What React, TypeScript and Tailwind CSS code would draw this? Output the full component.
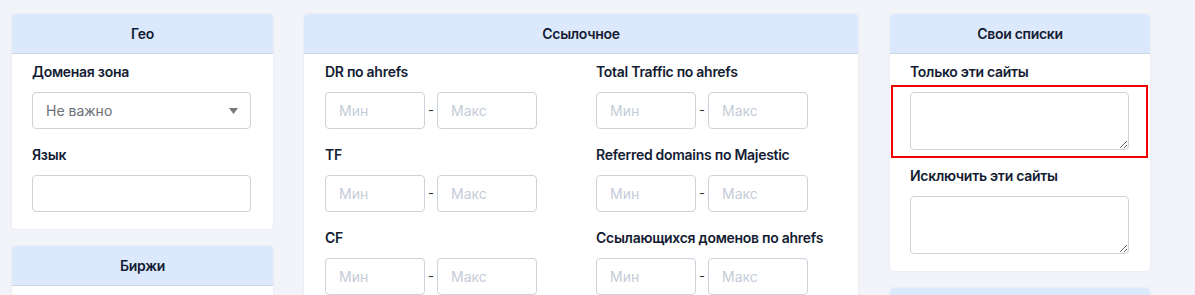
import React from 'react';

const font = { fontFamily: 'Inter, "Noto Sans", sans-serif' };

const Card: React.FC<{ title: string; className?: string; children?: React.ReactNode }> = ({
  title,
  className = '',
  children,
}) => (
  <div className={`rounded-[4px] bg-white shadow-[0_0_3px_rgba(30,40,80,0.08)] ${className}`}>
    <div className="flex h-10 items-center justify-center rounded-t-[4px] border-b border-[#c9d6ec] bg-[#dce8fb] text-[14px] font-semibold tracking-[-0.3px] text-[#141c33]">
      {title}
    </div>
    {children}
  </div>
);

const Label: React.FC<{ children: React.ReactNode }> = ({ children }) => (
  <div className="mb-[10px] h-5 text-[14px] font-semibold leading-5 tracking-[-0.28px] text-[#141c33]">
    {children}
  </div>
);

const RangeInputs = () => (
  <div className="flex items-center">
    <input
      placeholder="Мин"
      className="h-[37px] w-[100px] rounded-[4px] border border-[#cdd2da] px-[13px] text-[14px] outline-none placeholder:text-[#c5ccd8]"
    />
    <span className="w-3 text-center text-[13px] leading-none text-[#333]">-</span>
    <input
      placeholder="Макс"
      className="h-[37px] w-[100px] rounded-[4px] border border-[#cdd2da] px-[13px] text-[14px] outline-none placeholder:text-[#c5ccd8]"
    />
  </div>
);

const linkFilters = [
  ['DR по ahrefs', 'Total Traffic по ahrefs'],
  ['TF', 'Referred domains по Majestic'],
  ['CF', 'Ссылающихся доменов по ahrefs'],
];

export default function App() {
  return (
    <div className="flex h-[295px] items-start overflow-hidden bg-[#f3f4f9] pl-3 pt-[14px]" style={font}>
      {/* left column */}
      <div className="flex w-[261px] flex-col gap-[17px]">
        <Card title="Гео">
          <div className="px-5 pb-[17px] pt-[8px]">
            <Label>Доменая зона</Label>
            <div className="mb-4 flex h-[37px] w-[219px] items-center justify-between rounded-[4px] border border-[#cdd2da] pl-[13px] pr-[12px] text-[14px] text-[#6b7078]">
              <span>Не важно</span>
              <svg width="9" height="6" viewBox="0 0 9 6">
                <path d="M0 0h9L4.5 6z" fill="#7a7a7a" />
              </svg>
            </div>
            <Label>Язык</Label>
            <input className="h-[37px] w-[219px] rounded-[4px] border border-[#cdd2da] outline-none" />
          </div>
        </Card>
        <Card title="Биржи" className="h-[60px]" />
      </div>

      {/* middle column */}
      <Card title="Ссылочное" className="ml-[31px] w-[554px]">
        <div className="grid grid-cols-2 gap-x-[30px] px-[21px] pt-[8px]">
          {linkFilters.map(([a, b]) => (
            <React.Fragment key={a}>
              <div className="mb-4">
                <Label>{a}</Label>
                <RangeInputs />
              </div>
              <div className="mb-4">
                <Label>{b}</Label>
                <RangeInputs />
              </div>
            </React.Fragment>
          ))}
        </div>
      </Card>

      {/* right column */}
      <div className="ml-[32px] flex w-[260px] flex-col gap-[17px]">
        <Card title="Свои списки">
          <div className="px-5 pb-[17px] pt-[8px]">
            <Label>Только эти сайты</Label>
            <div className="relative mb-4">
              <textarea className="block h-[58px] w-[219px] rounded-[4px] border border-[#cdd2da] outline-none" />
              <div className="pointer-events-none absolute -bottom-[8px] -left-[19px] -right-[18px] -top-[7px] border-2 border-[#ee0000]" />
            </div>
            <Label>Исключить эти сайты</Label>
            <textarea className="block h-[58px] w-[219px] rounded-[4px] border border-[#cdd2da] outline-none" />
          </div>
        </Card>
        <Card title="" className="h-[60px]" />
      </div>
    </div>
  );
}
